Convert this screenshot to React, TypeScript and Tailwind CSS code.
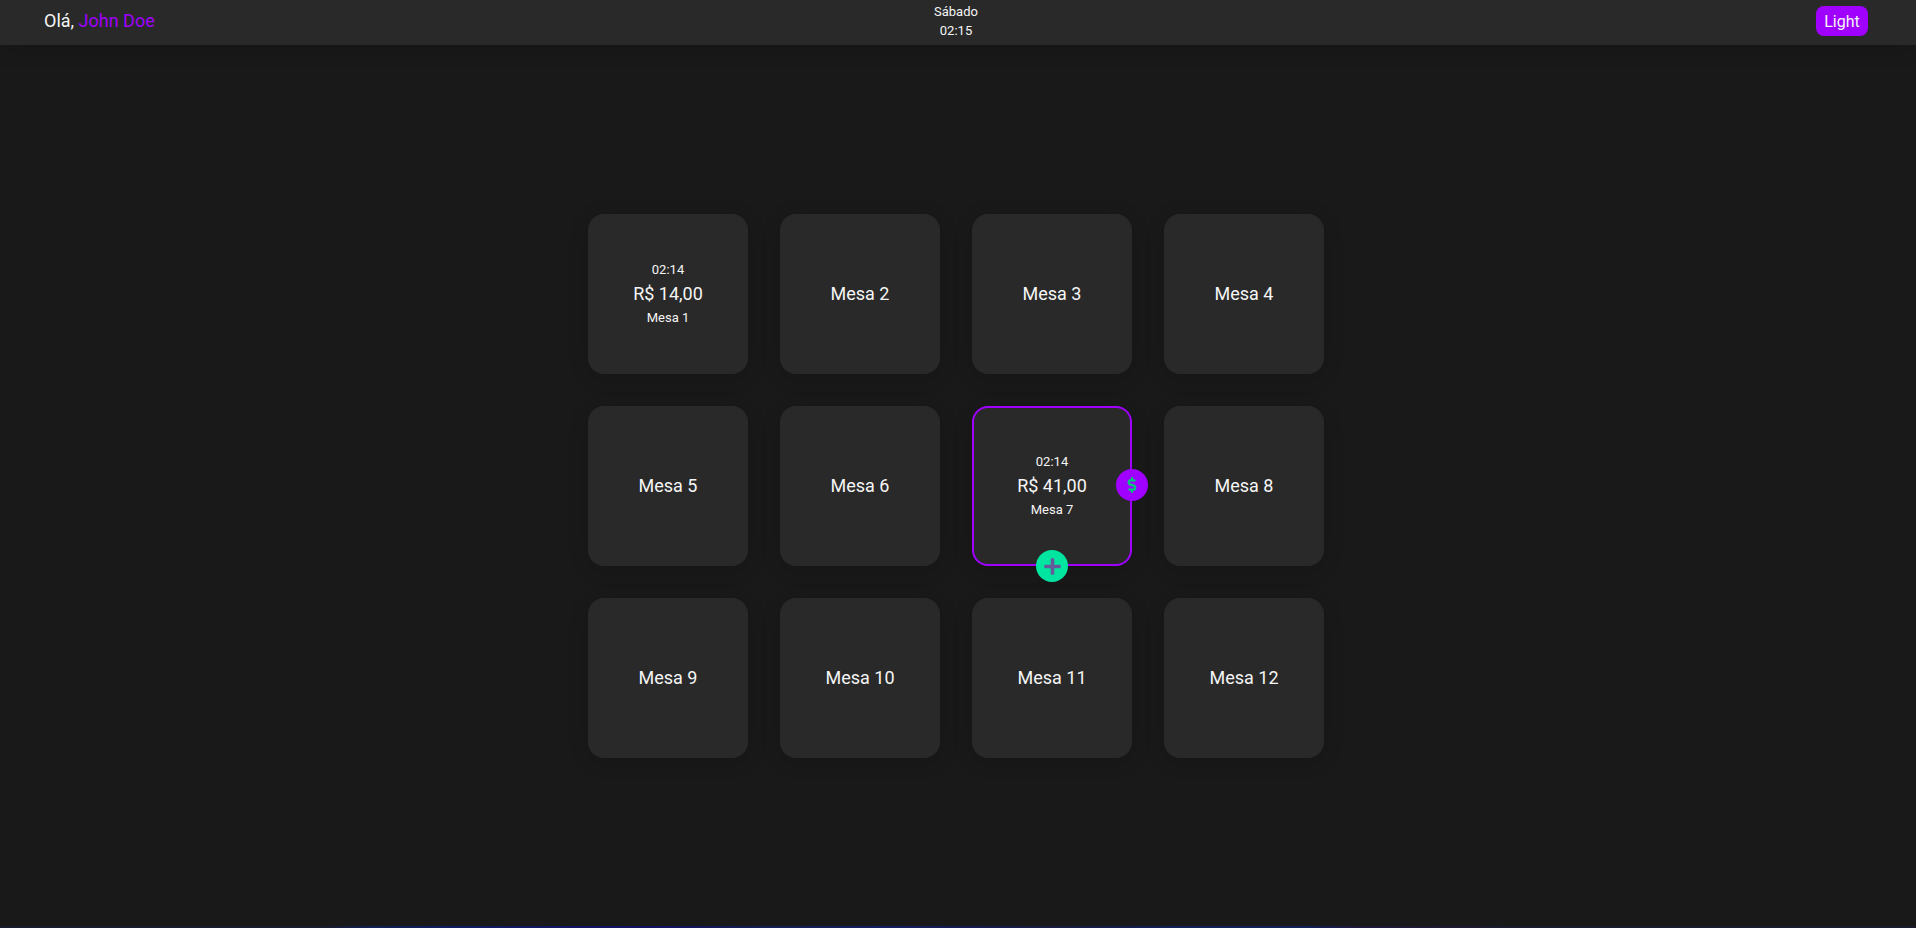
import { FaDollarSign, FaPlus } from "react-icons/fa";

type Table = { id: number; time?: string; total?: string; selected?: boolean };

const tables: Table[] = Array.from({ length: 12 }, (_, i) => {
  const id = i + 1;
  if (id === 1) return { id, time: "02:14", total: "R$ 14,00" };
  if (id === 7) return { id, time: "02:14", total: "R$ 41,00", selected: true };
  return { id };
});

function TableCard({ table }: { table: Table }) {
  return (
    <div
      className={`relative flex h-40 w-40 flex-col items-center justify-center rounded-2xl border-2 bg-[#292929] bg-clip-border pb-px text-center shadow-[0_4px_20px_rgba(0,0,0,0.15)] ${
        table.selected ? "border-[#a000ff]" : "border-[#292929]"
      }`}
    >
      {table.total ? (
        <>
          <span className="text-[13px] leading-[23px]">{table.time}</span>
          <span className="text-lg leading-[25px]">{table.total}</span>
          <span className="text-[13px] leading-[23px]">Mesa {table.id}</span>
        </>
      ) : (
        <span className="text-lg leading-[25px]">Mesa {table.id}</span>
      )}
      {table.selected && (
        <>
          <button className="absolute top-[61px] -right-[18px] flex h-8 w-8 items-center justify-center rounded-full bg-[#a000ff] text-[#00c57c]">
            <FaDollarSign size={16} />
          </button>
          <button className="absolute -bottom-[18px] left-[62px] flex h-8 w-8 items-center justify-center rounded-full bg-[#00e5a0] text-[#645b9b]">
            <FaPlus size={19} />
          </button>
        </>
      )}
    </div>
  );
}

export default function App() {
  return (
    <div className="flex h-screen flex-col overflow-hidden bg-[#191919] font-['Roboto',sans-serif] text-[#f5f5f5]">
      <header className="grid h-[45px] shrink-0 grid-cols-3 items-start bg-[#292929] pr-12 pl-11 shadow-[0_4px_20px_rgba(0,0,0,0.15)]">
        <p className="pt-2 text-lg leading-[25px]">
          Olá, <span className="text-[#a000ff]">John Doe</span>
        </p>
        <div className="flex flex-col items-center pt-0.5 text-[13px] leading-[19px]">
          <span>Sábado</span>
          <span>02:15</span>
        </div>
        <button className="mt-1.5 h-[30px] w-[52px] justify-self-end rounded-lg bg-[#a000ff] pt-px text-base leading-[29px]">
          Light
        </button>
      </header>
      <main className="flex flex-1 items-center justify-center pt-px pr-1">
        <div className="grid grid-cols-4 gap-8">
          {tables.map((table) => (
            <TableCard key={table.id} table={table} />
          ))}
        </div>
      </main>
      <footer className="h-0.5 shrink-0 bg-[linear-gradient(to_right,#191c2c_0%,#191c2c_17%,#122050_19%,#101d60_23%,#130f63_34%,#132050_40%,#131d63_46%,#191c40_55%,#10205a_62%,#10205a_68%,#20183a_71%,#191c2c_80%,#191c2c_100%)]" />
    </div>
  );
}
